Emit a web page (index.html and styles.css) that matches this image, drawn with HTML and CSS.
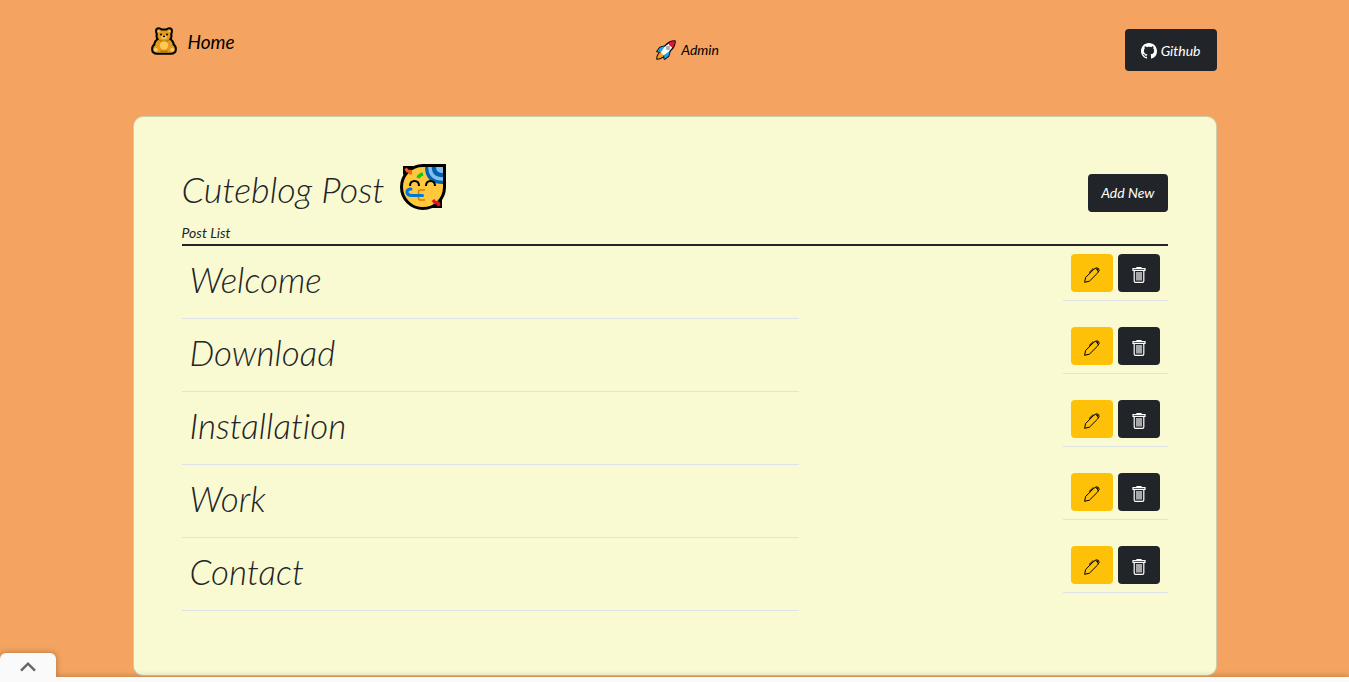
FILE: index.html
```
<!DOCTYPE html>
<html lang="en">
<head>
<meta charset="utf-8">
<meta name="viewport" content="width=device-width, initial-scale=1">
<title>Cuteblog Post</title>
<link rel="stylesheet" href="styles.css">
</head>
<body>
<svg class="sprite" aria-hidden="true">
  <symbol id="pencil" viewBox="0 0 16 16">
    <path fill="none" stroke="currentColor" stroke-linejoin="round" d="M.6 15.3 1.600 10.500 9.800 2.300Q12.400-.2 14.500 1.400 16.200 3.300 13.600 6L5.400 14.200ZM13 1.600 14 4.600M9.800 2.300 8.800 1.900 5 5.600M11.800 1.500 13.500 3"/>
  </symbol>
  <symbol id="trash" viewBox="0 0 16 16">
    <path fill="none" stroke="currentColor" stroke-width="1.200" d="M2 1.700h12v1.800H2ZM3.200 4v10q0 1.400 1.300 1.400h7q1.300 0 1.300-1.400V4M6 1.500V.6h4v.9M6 5v8.500M8 5v8.500M10 5v8.500"/>
  </symbol>
</svg>

<header class="nav">
  <a class="brand" href="#">
    <svg class="brand-icon" viewBox="0 0 26 28" aria-hidden="true">
      <path fill="#e09a1c" stroke="#000" stroke-width="4" stroke-linejoin="round" d="M6 4Q6 2.200 7.700 2.200 9.500 2.200 10 3.500h6q.5-1.300 2.300-1.300Q20 2.200 20 4q0 1.500-.8 2.500 1 3.500-1.200 6 3.500 1.500 3.700 5.500 2.200 1.500 2.200 4 0 3.800-4.400 3.800H6.500Q2.100 25.800 2.100 22q0-2.500 2.200-4 .2-4 3.700-5.500-2.200-2.500-1.200-6Q6 5.500 6 4Z"/>
      <path fill="#e09a1c" d="M6 4Q6 2.200 7.700 2.200 9.500 2.200 10 3.500h6q.5-1.300 2.300-1.300Q20 2.200 20 4q0 1.500-.8 2.500 1 3.500-1.200 6 3.500 1.500 3.700 5.500 2.200 1.500 2.200 4 0 3.800-4.400 3.800H6.500Q2.100 25.800 2.100 22q0-2.500 2.200-4 .2-4 3.700-5.500-2.200-2.500-1.200-6Q6 5.500 6 4Z"/>
      <path fill="#b97809" d="M8 12.500q5 2.500 10 0v1.500q-5 2-10 0ZM9 23.500h8l-1 2.500h-6Z"/>
      <g fill="#ffc95a"><circle cx="13" cy="18.500" r="4.200"/><circle cx="4.800" cy="22.800" r="2"/><circle cx="21.200" cy="22.800" r="2"/><circle cx="7.700" cy="4.200" r="1"/><circle cx="18.300" cy="4.200" r="1"/><ellipse cx="13" cy="10" rx="2.800" ry="2"/></g>
      <circle cx="10" cy="7.500" r="1"/><circle cx="16" cy="7.500" r="1"/><ellipse cx="13" cy="9.300" rx="1.300" ry=".9"/>
    </svg>
    <span>Home</span>
  </a>
  <a class="admin" href="#">
    <svg class="admin-icon" viewBox="0 0 20 20" aria-hidden="true">
      <path fill="#dfe5ea" stroke="#000" stroke-width="1.600" stroke-linejoin="round" d="M19 1q-6 0-10 5L4 7.500 1 11.500l3 .5-2.500 4L1 19l3-.5 4-2.500.5 3 4-3L14 11q5-4 5-10Z"/>
      <path fill="#1ba5e0" d="m9 6-5 1.500-3 4 4 .5ZM14 11l-1.500 5-4 3L8 15Z"/>
      <path fill="#fff" d="M17 3q-5 0-8.500 4.500L5.500 12 8 14.500l4.500-3Q17 8 17 3Z"/>
      <path fill="#e3172f" d="M19 1q-4 0-6.500 2 .5 3.500 4.500 4.500Q19 4.500 19 1Z"/>
      <path fill="#f6a01a" d="m4 12-2.300 4L1.200 18.800 4 18.300 8 16Z"/>
      <circle cx="12" cy="8" r="2.200" fill="#a9b0b8"/>
    </svg>
    <span>Admin</span>
  </a>
  <a class="btn btn-dark btn-github" href="#">
    <svg class="icon" viewBox="0 0 16 16" aria-hidden="true"><path fill="currentColor" d="M8 0C3.580 0 0 3.580 0 8c0 3.540 2.290 6.530 5.470 7.590.4.070.55-.17.55-.38 0-.19-.01-.82-.01-1.490-2.010.37-2.530-.49-2.690-.94-.09-.23-.48-.94-.82-1.130-.28-.15-.68-.52-.01-.53.63-.01 1.080.58 1.230.82.72 1.210 1.870.87 2.330.66.070-.52.28-.87.51-1.070-1.780-.2-3.640-.89-3.640-3.950 0-.87.31-1.590.82-2.150-.08-.2-.36-1.020.08-2.120 0 0 .67-.21 2.200.82.640-.18 1.320-.27 2-.27s1.360.09 2 .27c1.530-1.040 2.200-.82 2.200-.82.44 1.100.16 1.920.08 2.120.51.56.82 1.270.82 2.150 0 3.070-1.870 3.750-3.650 3.950.29.25.54.73.54 1.480 0 1.070-.01 1.930-.01 2.200 0 .21.15.46.55.38A8.010 8.010 0 0 0 16 8c0-4.420-3.580-8-8-8Z"/></svg>
    <span>Github</span>
  </a>
</header>

<main class="card">
  <div class="card-head">
    <h1 class="title">
      <span>Cuteblog Post</span>
      <svg class="title-icon" viewBox="0 0 46 46" aria-hidden="true">
        <path fill="#000" d="M3 2h11L5 13 3 10ZM31 44l10-11 1 4v7Z"/>
        <path fill="#ffc83d" stroke="#000" stroke-width="3" d="M23 1.500H44.500V23A21.500 21.500 0 1 1 23 1.500Z"/>
        <path fill="#0063b1" d="M25 3h18v17Q25 20 25 3Z"/>
        <path fill="none" stroke="#83beec" stroke-width="3.500" d="M30 3q0 12 13 12"/>
        <path fill="#83beec" d="M36 3h7v6q-7 0-7-6Z"/>
        <path fill="none" stroke="#f7630c" stroke-width="3" d="m5.500 4.500 2 2.500 3 .5v3"/>
        <path fill="none" stroke="#e81224" stroke-width="3.500" d="m33 36 2 2.500 3 .5 1 3"/>
        <path fill="none" stroke="#16c60c" stroke-width="3.500" d="M18 14q1-3 5-4"/>
        <path fill="none" stroke="#000" stroke-width="2" d="M10 22q0-5 4.500-5t4.500 5M26 22q0-5 4.500-5t4.500 5"/>
        <path fill="none" stroke="#d67d00" stroke-width="1.500" d="M25 26h-5q-1.500 0-1.500 2.500T20 31q-1.500 0-1.500 2.500T20 36h5"/>
        <path fill="none" stroke="#0078d7" stroke-width="3" stroke-linecap="round" d="M11 25q-4 0-4 3 0 3 4 3.500H22.500"/>
      </svg>
    </h1>
    <button class="btn btn-dark btn-add" type="button">Add New</button>
  </div>

  <table class="posts">
    <thead>
      <tr><th class="heading" scope="col" colspan="3">Post List</th></tr>
    </thead>
    <tbody>
      <tr>
        <td class="name">Welcome</td><td></td>
        <td class="actions"><div class="buttons">
          <button class="btn btn-edit" type="button" aria-label="Edit Welcome"><svg class="icon"><use href="#pencil"/></svg></button>
          <button class="btn btn-dark" type="button" aria-label="Delete Welcome"><svg class="icon"><use href="#trash"/></svg></button>
        </div></td>
      </tr>
      <tr>
        <td class="name">Download</td><td></td>
        <td class="actions"><div class="buttons">
          <button class="btn btn-edit" type="button" aria-label="Edit Download"><svg class="icon"><use href="#pencil"/></svg></button>
          <button class="btn btn-dark" type="button" aria-label="Delete Download"><svg class="icon"><use href="#trash"/></svg></button>
        </div></td>
      </tr>
      <tr>
        <td class="name">Installation</td><td></td>
        <td class="actions"><div class="buttons">
          <button class="btn btn-edit" type="button" aria-label="Edit Installation"><svg class="icon"><use href="#pencil"/></svg></button>
          <button class="btn btn-dark" type="button" aria-label="Delete Installation"><svg class="icon"><use href="#trash"/></svg></button>
        </div></td>
      </tr>
      <tr>
        <td class="name">Work</td><td></td>
        <td class="actions"><div class="buttons">
          <button class="btn btn-edit" type="button" aria-label="Edit Work"><svg class="icon"><use href="#pencil"/></svg></button>
          <button class="btn btn-dark" type="button" aria-label="Delete Work"><svg class="icon"><use href="#trash"/></svg></button>
        </div></td>
      </tr>
      <tr>
        <td class="name">Contact</td><td></td>
        <td class="actions"><div class="buttons">
          <button class="btn btn-edit" type="button" aria-label="Edit Contact"><svg class="icon"><use href="#pencil"/></svg></button>
          <button class="btn btn-dark" type="button" aria-label="Delete Contact"><svg class="icon"><use href="#trash"/></svg></button>
        </div></td>
      </tr>
    </tbody>
  </table>
</main>

<div class="drawer">
  <button class="drawer-tab" type="button" aria-label="Open panel">
    <svg class="chevron" viewBox="0 0 16 10" aria-hidden="true"><path fill="none" stroke="#666" stroke-width="2.400" d="m1 8.700 7-7 7 7"/></svg>
  </button>
  <div class="drawer-bar"></div>
</div>
</body>
</html>
```
FILE: styles.css
```
* {
  box-sizing: border-box;
}

body {
  margin: 0;
  background: #f4a460;
  color: #212529;
  font-family: Lato, "Open Sans", sans-serif;
  font-style: italic;
  font-weight: 400;
  font-size: 14px;
  font-variant-ligatures: none;
  line-height: 24px;
}

.sprite {
  position: absolute;
  width: 0;
  height: 0;
}

.nav,
.card {
  width: calc(100% - 32px);
  max-width: 1084px;
  margin: 0 auto;
}

.nav {
  display: flex;
  align-items: center;
  justify-content: space-between;
  min-height: 100px;
}

.brand,
.admin {
  display: flex;
  align-items: center;
  color: #000;
  text-decoration: none;
}

.brand {
  gap: 11px;
  padding: 0 16px 18px 18px;
  font-size: 19px;
}

.brand-icon {
  width: 26px;
  height: 28px;
}

.brand span {
  padding-top: 2px;
}

.admin {
  gap: 5px;
  padding: 0 16px;
}

.admin-icon {
  width: 20px;
  height: 20px;
}

.btn {
  display: inline-flex;
  align-items: center;
  justify-content: center;
  min-height: 38px;
  padding: 0 13px;
  border: 0;
  border-radius: 4px;
  font: inherit;
  text-decoration: none;
  cursor: pointer;
}

.btn-dark {
  background: #212529;
  color: #fff;
}

.btn-edit {
  background: #ffc107;
  color: #000;
}

.btn-github {
  gap: 4px;
  min-height: 42px;
  padding: 2px 16px 0;
}

.icon {
  width: 16px;
  height: 16px;
}

.card {
  margin-top: 16px;
  padding: 45px 48px 64px;
  background: #fafad2;
  border: 1px solid rgba(0, 0, 0, 0.175);
  border-radius: 10px;
}

.card-head {
  display: flex;
  align-items: center;
  justify-content: space-between;
  height: 60px;
}

.btn-add {
  margin-top: 2px;
}

.title {
  display: flex;
  align-items: center;
  gap: 15px;
  margin: 0 0 10px;
  font-size: 36px;
  font-weight: 300;
  line-height: 48px;
}

.title span {
  padding-top: 4px;
}

.title-icon {
  width: 46px;
  height: 46px;
}

.posts {
  width: 100%;
  border-collapse: separate;
  border-spacing: 0;
}

.heading {
  padding: 0;
  border-bottom: 2px solid #212529;
  font-weight: 400;
  line-height: 22px;
  text-align: left;
}

.name {
  width: 617px;
  height: 73px;
  padding: 8px 8px 14px;
  border-bottom: 1px solid #dee2e6;
  font-size: 35px;
  font-weight: 300;
  line-height: 48px;
}

.actions {
  width: 105px;
  padding: 0;
  vertical-align: top;
}

.buttons {
  display: flex;
  gap: 5px;
  padding: 8px;
  border-bottom: 1px solid #dee2e6;
}

.buttons .icon {
  margin-top: 4px;
}

.drawer {
  position: fixed;
  right: 0;
  bottom: 0;
  left: 0;
  filter: drop-shadow(0 0 3px rgba(0, 0, 0, 0.3));
}

.drawer-tab {
  display: flex;
  align-items: center;
  justify-content: center;
  width: 56px;
  height: 24px;
  padding: 4px 0 0;
  border: 0;
  border-radius: 6px 6px 0 0;
  background: #fafafa;
}

.chevron {
  width: 16px;
  height: 10px;
}

.drawer-bar {
  height: 5px;
  background: #fafafa;
}
```
